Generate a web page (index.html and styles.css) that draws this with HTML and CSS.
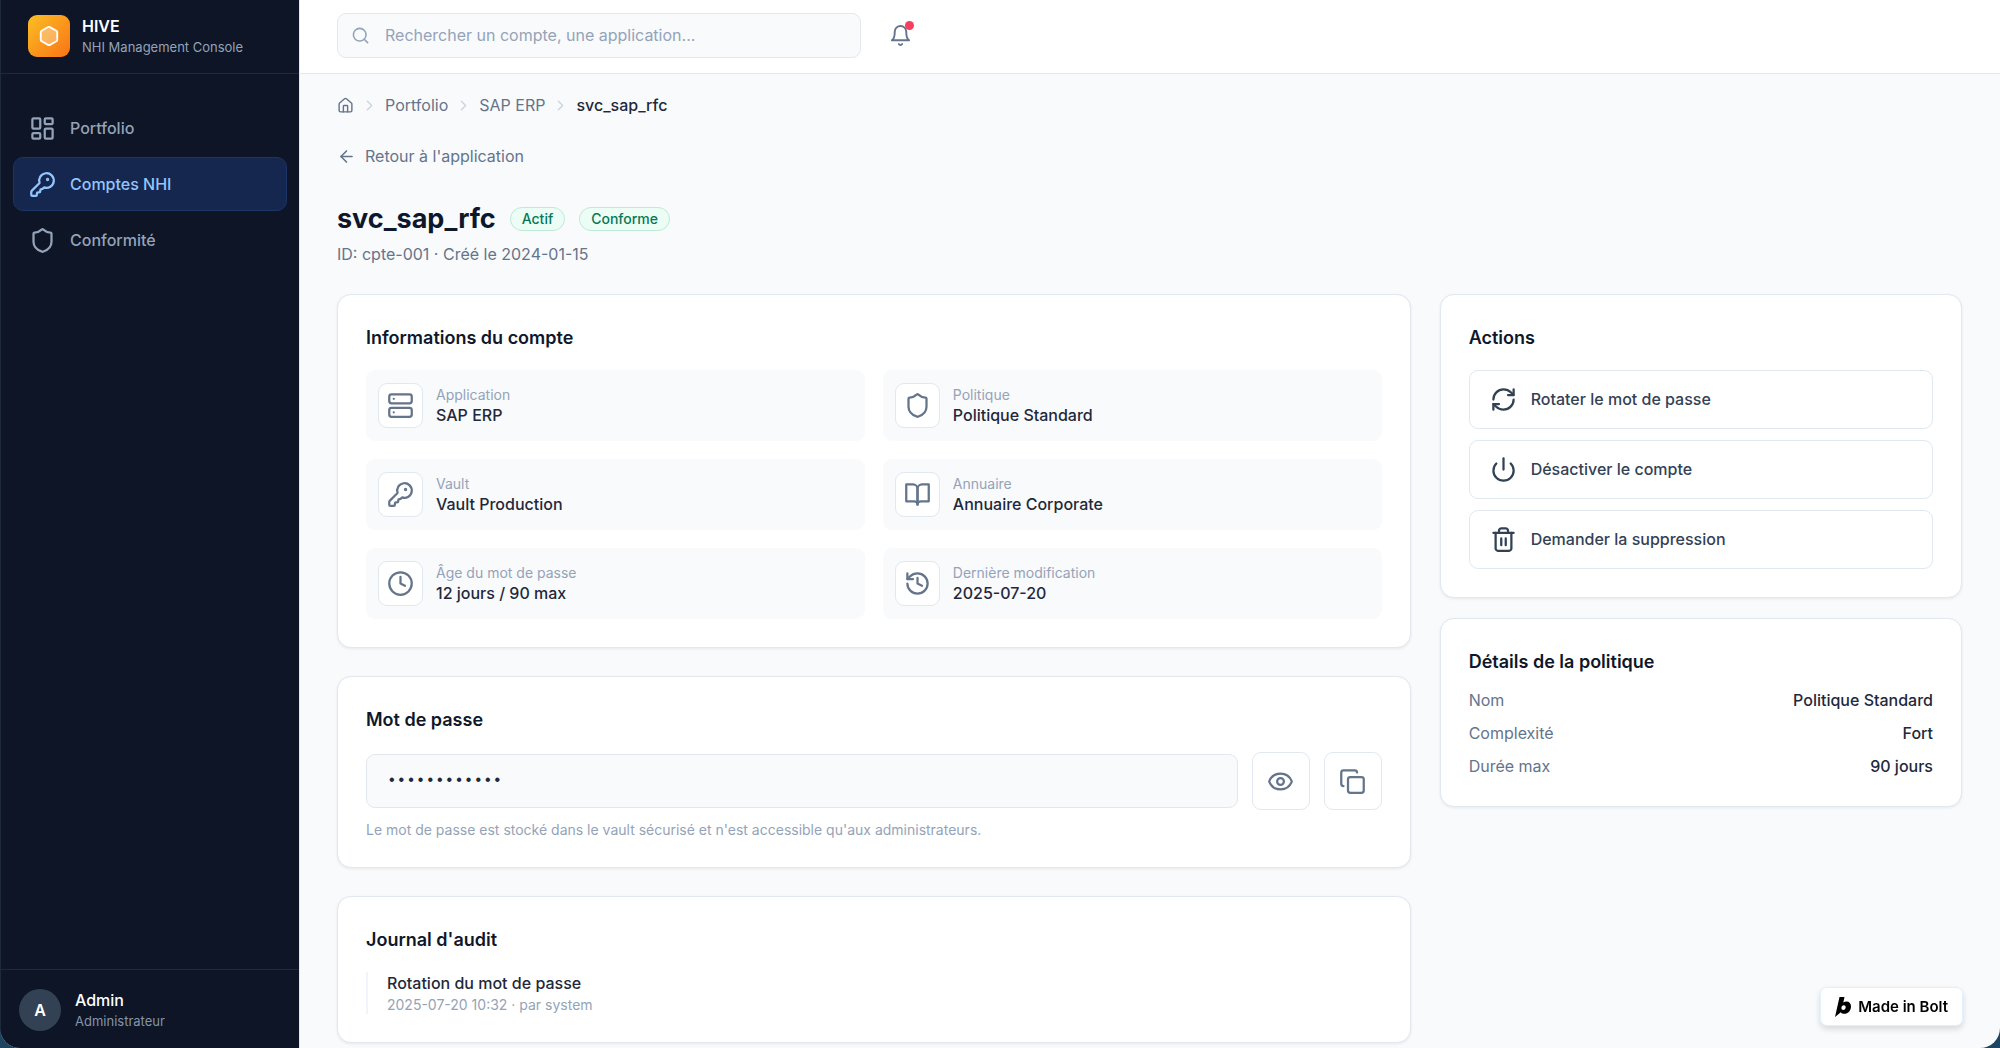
FILE: index.html
```html
<!DOCTYPE html>
<html lang="fr">
<head>
  <meta charset="UTF-8">
  <meta name="viewport" content="width=device-width, initial-scale=1.0">
  <title>HIVE - NHI Management Console</title>
  <link rel="stylesheet" href="styles.css">
</head>
<body>
  <div class="app">
    <aside class="sidebar">
      <div class="brand">
        <div class="logo">
          <svg class="icon" viewBox="0 0 24 24"><path fill="#fff" fill-opacity=".3" d="M21 16V8a2 2 0 0 0-1-1.73l-7-4a2 2 0 0 0-2 0l-7 4A2 2 0 0 0 3 8v8a2 2 0 0 0 1 1.73l7 4a2 2 0 0 0 2 0l7-4A2 2 0 0 0 21 16z"/></svg>
        </div>
        <div>
          <div class="brand-name">HIVE</div>
          <div class="brand-sub">NHI Management Console</div>
        </div>
      </div>

      <nav class="nav">
        <a href="#" class="nav-link">
          <svg class="icon icon-lg" viewBox="0 0 24 24"><rect width="7" height="9" x="3" y="3" rx="1"/><rect width="7" height="5" x="14" y="3" rx="1"/><rect width="7" height="9" x="14" y="12" rx="1"/><rect width="7" height="5" x="3" y="16" rx="1"/></svg>
          Portfolio
        </a>
        <a href="#" class="nav-link active">
          <svg class="icon icon-lg" viewBox="0 0 24 24"><path d="M2.586 17.414A2 2 0 0 0 2 18.828V21a1 1 0 0 0 1 1h3a1 1 0 0 0 1-1v-1a1 1 0 0 1 1-1h1a1 1 0 0 0 1-1v-1a1 1 0 0 1 1-1h.172a2 2 0 0 0 1.414-.586l.814-.814a6.5 6.5 0 1 0-4-4z"/><circle cx="16.5" cy="7.5" r=".5" fill="currentColor"/></svg>
          Comptes NHI
        </a>
        <a href="#" class="nav-link">
          <svg class="icon icon-lg" viewBox="0 0 24 24"><path d="M20 13c0 5-3.5 7.5-7.66 8.95a1 1 0 0 1-.67-.01C7.5 20.5 4 18 4 13V6a1 1 0 0 1 1-1c2 0 4.5-1.2 6.24-2.72a1.17 1.17 0 0 1 1.52 0C14.51 3.81 17 5 19 5a1 1 0 0 1 1 1z"/></svg>
          Conformité
        </a>
      </nav>

      <div class="user">
        <div class="avatar">A</div>
        <div>
          <div class="user-name">Admin</div>
          <div class="user-role">Administrateur</div>
        </div>
      </div>
    </aside>

    <div class="main">
      <header class="topbar">
        <label class="search">
          <svg class="icon icon-sm" viewBox="0 0 24 24"><circle cx="11" cy="11" r="8"/><path d="m21 21-4.3-4.3"/></svg>
          <input type="search" placeholder="Rechercher un compte, une application..." aria-label="Rechercher">
        </label>
        <button type="button" class="bell" aria-label="Notifications">
          <svg class="icon icon-md" viewBox="0 0 24 24"><path d="M6 8a6 6 0 0 1 12 0c0 7 3 9 3 9H3s3-2 3-9"/><path d="M10.3 21a1.94 1.94 0 0 0 3.4 0"/></svg>
          <span class="dot"></span>
        </button>
      </header>

      <main class="content">
        <nav class="breadcrumb">
          <a href="#" aria-label="Accueil"><svg class="icon icon-xs" viewBox="0 0 24 24"><path d="M15 21v-8a1 1 0 0 0-1-1h-4a1 1 0 0 0-1 1v8"/><path d="M3 10a2 2 0 0 1 .709-1.528l7-5.999a2 2 0 0 1 2.582 0l7 5.999A2 2 0 0 1 21 10v9a2 2 0 0 1-2 2H5a2 2 0 0 1-2-2z"/></svg></a>
          <svg class="icon icon-xs sep" viewBox="0 0 24 24"><path d="m9 18 6-6-6-6"/></svg>
          <a href="#">Portfolio</a>
          <svg class="icon icon-xs sep" viewBox="0 0 24 24"><path d="m9 18 6-6-6-6"/></svg>
          <a href="#">SAP ERP</a>
          <svg class="icon icon-xs sep" viewBox="0 0 24 24"><path d="m9 18 6-6-6-6"/></svg>
          <span class="current">svc_sap_rfc</span>
        </nav>

        <a href="#" class="back">
          <svg class="icon icon-sm" viewBox="0 0 24 24"><path d="m12 19-7-7 7-7"/><path d="M19 12H5"/></svg>
          Retour à l'application
        </a>

        <div class="title-row">
          <h1>svc_sap_rfc</h1>
          <span class="badge">Actif</span>
          <span class="badge">Conforme</span>
        </div>
        <p class="subtitle">ID: cpte-001 · Créé le 2024-01-15</p>

        <div class="columns">
          <div class="col-left">
            <section class="card">
              <h2>Informations du compte</h2>
              <div class="info-grid">
                <div class="info">
                  <div class="info-icon"><svg class="icon icon-lg" viewBox="0 0 24 24"><rect width="20" height="8" x="2" y="2" rx="2"/><rect width="20" height="8" x="2" y="14" rx="2"/><path d="M6 6h.01M6 18h.01"/></svg></div>
                  <div>
                    <div class="small">Application</div>
                    <div class="value">SAP ERP</div>
                  </div>
                </div>
                <div class="info">
                  <div class="info-icon"><svg class="icon icon-lg" viewBox="0 0 24 24"><path d="M20 13c0 5-3.5 7.5-7.66 8.95a1 1 0 0 1-.67-.01C7.5 20.5 4 18 4 13V6a1 1 0 0 1 1-1c2 0 4.5-1.2 6.24-2.72a1.17 1.17 0 0 1 1.52 0C14.51 3.81 17 5 19 5a1 1 0 0 1 1 1z"/></svg></div>
                  <div>
                    <div class="small">Politique</div>
                    <div class="value">Politique Standard</div>
                  </div>
                </div>
                <div class="info">
                  <div class="info-icon"><svg class="icon icon-lg" viewBox="0 0 24 24"><path d="M2.586 17.414A2 2 0 0 0 2 18.828V21a1 1 0 0 0 1 1h3a1 1 0 0 0 1-1v-1a1 1 0 0 1 1-1h1a1 1 0 0 0 1-1v-1a1 1 0 0 1 1-1h.172a2 2 0 0 0 1.414-.586l.814-.814a6.5 6.5 0 1 0-4-4z"/><circle cx="16.5" cy="7.5" r=".5" fill="currentColor"/></svg></div>
                  <div>
                    <div class="small">Vault</div>
                    <div class="value">Vault Production</div>
                  </div>
                </div>
                <div class="info">
                  <div class="info-icon"><svg class="icon icon-lg" viewBox="0 0 24 24"><path d="M2 3h6a4 4 0 0 1 4 4v14a3 3 0 0 0-3-3H2z"/><path d="M22 3h-6a4 4 0 0 0-4 4v14a3 3 0 0 1 3-3h7z"/></svg></div>
                  <div>
                    <div class="small">Annuaire</div>
                    <div class="value">Annuaire Corporate</div>
                  </div>
                </div>
                <div class="info">
                  <div class="info-icon"><svg class="icon icon-lg" viewBox="0 0 24 24"><circle cx="12" cy="12" r="10"/><path d="M12 6v6l4 2"/></svg></div>
                  <div>
                    <div class="small">Âge du mot de passe</div>
                    <div class="value">12 jours / 90 max</div>
                  </div>
                </div>
                <div class="info">
                  <div class="info-icon"><svg class="icon icon-lg" viewBox="0 0 24 24"><path d="M3 12a9 9 0 1 0 9-9 9.75 9.75 0 0 0-6.74 2.74L3 8"/><path d="M3 3v5h5"/><path d="M12 7v5l4 2"/></svg></div>
                  <div>
                    <div class="small">Dernière modification</div>
                    <div class="value">2025-07-20</div>
                  </div>
                </div>
              </div>
            </section>

            <section class="card">
              <h2><label for="password">Mot de passe</label></h2>
              <div class="password-row">
                <input type="password" id="password" value="motdepasse12" readonly>
                <button type="button" class="icon-btn" aria-label="Afficher"><svg class="icon icon-lg" viewBox="0 0 24 24"><path d="M2.062 12.348a1 1 0 0 1 0-.696 10.75 10.75 0 0 1 19.876 0 1 1 0 0 1 0 .696 10.75 10.75 0 0 1-19.876 0"/><circle cx="12" cy="12" r="3"/></svg></button>
                <button type="button" class="icon-btn" aria-label="Copier"><svg class="icon icon-lg" viewBox="0 0 24 24"><rect width="14" height="14" x="8" y="8" rx="2"/><path d="M4 16c-1.1 0-2-.9-2-2V4c0-1.1.9-2 2-2h10c1.1 0 2 .9 2 2"/></svg></button>
              </div>
              <p class="small hint">Le mot de passe est stocké dans le vault sécurisé et n'est accessible qu'aux administrateurs.</p>
            </section>

            <section class="card">
              <h2>Journal d'audit</h2>
              <div class="log">
                <div class="value">Rotation du mot de passe</div>
                <div class="small">2025-07-20 10:32 · par system</div>
              </div>
            </section>
          </div>

          <div class="col-right">
            <section class="card">
              <h2>Actions</h2>
              <div class="actions">
                <button type="button" class="action">
                  <svg class="icon icon-lg" viewBox="0 0 24 24"><path d="M3 12a9 9 0 0 1 9-9 9.75 9.75 0 0 1 6.74 2.74L21 8"/><path d="M21 3v5h-5"/><path d="M21 12a9 9 0 0 1-9 9 9.75 9.75 0 0 1-6.74-2.74L3 16"/><path d="M8 16H3v5"/></svg>
                  Rotater le mot de passe
                </button>
                <button type="button" class="action">
                  <svg class="icon icon-lg" viewBox="0 0 24 24"><path d="M12 2v10"/><path d="M18.4 6.6a9 9 0 1 1-12.77.04"/></svg>
                  Désactiver le compte
                </button>
                <button type="button" class="action">
                  <svg class="icon icon-lg" viewBox="0 0 24 24"><path d="M3 6h18"/><path d="M19 6v14c0 1-1 2-2 2H7c-1 0-2-1-2-2V6"/><path d="M8 6V4c0-1 1-2 2-2h4c1 0 2 1 2 2v2"/><path d="M10 11v6M14 11v6"/></svg>
                  Demander la suppression
                </button>
              </div>
            </section>

            <section class="card policy">
              <h2>Détails de la politique</h2>
              <dl>
                <div><dt>Nom</dt><dd>Politique Standard</dd></div>
                <div><dt>Complexité</dt><dd>Fort</dd></div>
                <div><dt>Durée max</dt><dd>90 jours</dd></div>
              </dl>
            </section>
          </div>
        </div>
      </main>
    </div>

    <a href="#" class="bolt">
      <svg viewBox="0 0 16 20"><path fill-rule="evenodd" d="M4.5 0h5L8.3 5.6C9.3 4.8 10.3 4.5 11.4 4.5c3 0 4.6 2 4.6 5 0 4-2.8 7.3-6.7 7.3-1.6 0-2.8-.5-3.5-1.5L0 20zM8.800 8.300c-1.400 0-2.400 1.200-2.400 2.700 0 1.200.7 1.900 1.800 1.900 1.400 0 2.500-1.200 2.500-2.700 0-1.100-.7-1.900-1.900-1.900z"/></svg>
      Made in Bolt
    </a>
  </div>
</body>
</html>
```
FILE: styles.css
```css
* {
  box-sizing: border-box;
  margin: 0;
  padding: 0;
}

body {
  background: #1d4460;
  color: #1e293b;
  font-family: Inter, "Liberation Sans", sans-serif;
  font-size: 16px;
  line-height: 23px;
}

a {
  color: inherit;
  text-decoration: none;
}

button, input {
  font: inherit;
  color: inherit;
}

.icon {
  display: block;
  flex: none;
  width: 22px;
  height: 22px;
  fill: none;
  stroke: currentColor;
  stroke-width: 2;
  stroke-linecap: round;
  stroke-linejoin: round;
}

.icon-xs {
  width: 17px;
  height: 17px;
}

.icon-sm {
  width: 19px;
  height: 19px;
}

.icon-md {
  width: 23px;
  height: 23px;
}

.icon-lg {
  width: 27px;
  height: 27px;
}

.app {
  display: flex;
  height: 100vh;
  overflow: hidden;
  background: #f9fafc;
  border-radius: 0 0 20px 20px;
}

/* sidebar */
.sidebar {
  display: flex;
  flex-direction: column;
  flex: none;
  width: 300px;
  background: #0d1526;
  border-left: 1px solid #1e293b;
  border-right: 1px solid #e2e8f0;
}

.brand {
  display: flex;
  align-items: center;
  gap: 12px;
  height: 74px;
  padding: 0 27px 1px;
  border-bottom: 1px solid #1e293b;
}

.logo {
  display: grid;
  place-items: center;
  width: 42px;
  height: 42px;
  border-radius: 9px;
  background: linear-gradient(135deg, #fbbf24, #f97316);
  color: #fff;
}

.brand-name {
  color: #fff;
  font-weight: 600;
}

.brand-sub, .user-role {
  color: #94a3b8;
  font-size: 13px;
  line-height: 19px;
}

.nav {
  display: flex;
  flex-direction: column;
  flex: 1;
  gap: 2px;
  padding: 27px 12px;
}

.nav-link {
  display: flex;
  align-items: center;
  gap: 14px;
  height: 54px;
  padding: 0 15px;
  border: 1px solid transparent;
  border-radius: 10px;
  color: #94a3b8;
  font-weight: 500;
}

.nav-link.active {
  background: #15264f;
  border-color: #1c3566;
  color: #93c5fd;
}

.user {
  display: flex;
  align-items: center;
  gap: 14px;
  height: 79px;
  padding: 2px 18px 0;
  border-top: 1px solid #1e293b;
}

.avatar {
  display: grid;
  place-items: center;
  width: 42px;
  height: 42px;
  border-radius: 50%;
  background: #334155;
  color: #fff;
  font-weight: 600;
}

.user-name {
  color: #fff;
  font-weight: 500;
}

.user-role {
  color: #8494aa;
}

/* main */
.main {
  flex: 1;
  min-width: 0;
}

.topbar {
  display: flex;
  align-items: center;
  gap: 28px;
  height: 74px;
  padding: 0 37px 2px;
  background: #fff;
  border-bottom: 1px solid #e2e8f0;
}

.search {
  display: flex;
  align-items: center;
  gap: 15px;
  width: 524px;
  height: 45px;
  padding: 0 13px;
  background: #f9fafc;
  border: 1px solid #e2e8f0;
  border-radius: 9px;
  color: #94a3b8;
}

.search input {
  flex: 1;
  border: none;
  outline: none;
  background: none;
}

.search input::placeholder {
  color: #94a3b8;
}

.bell {
  position: relative;
  border: none;
  background: none;
  color: #64748b;
}

.dot {
  position: absolute;
  top: -3px;
  right: -2px;
  width: 9px;
  height: 9px;
  border-radius: 50%;
  background: #f43f5e;
}

.content {
  padding: 20px 38px 20px 37px;
}

.breadcrumb {
  display: flex;
  align-items: center;
  gap: 7px;
  color: #64748b;
}

.sep {
  color: #cbd5e1;
}

.current {
  color: #1e293b;
  font-weight: 500;
}

.back {
  display: inline-flex;
  align-items: center;
  gap: 9px;
  margin-top: 28px;
  color: #64748b;
}

.title-row {
  display: flex;
  align-items: center;
  gap: 14px;
  margin-top: 27px;
}

h1 {
  color: #0f172a;
  font-size: 27px;
  line-height: 40px;
  font-weight: 700;
}

.badge {
  padding: 0 11px;
  border: 1px solid #bfead6;
  border-radius: 12px;
  background: #ecfdf5;
  color: #047857;
  font-size: 14px;
  line-height: 22px;
  font-weight: 500;
}

.subtitle {
  margin-top: 4px;
  color: #64748b;
}

.columns {
  display: grid;
  grid-template-columns: repeat(3, 1fr);
  align-items: start;
  gap: 29px;
  margin-top: 28px;
}

.col-left {
  display: grid;
  grid-column: span 2;
  gap: 28px;
}

.col-right {
  display: grid;
  gap: 20px;
}

.card {
  padding: 28px;
  background: #fff;
  border: 1px solid #e2e8f0;
  border-radius: 14px;
  box-shadow: 0 1px 3px rgba(15, 23, 42, 0.08);
}

h2 {
  margin-bottom: 17px;
  color: #0f172a;
  font-size: 18px;
  line-height: 30px;
  font-weight: 600;
}

.info-grid {
  display: grid;
  grid-template-columns: 1fr 1fr;
  gap: 18px;
}

.info {
  display: flex;
  align-items: center;
  gap: 13px;
  padding: 13px 12px;
  border-radius: 9px;
  background: #f9fafc;
}

.info-icon {
  display: grid;
  place-items: center;
  width: 45px;
  height: 45px;
  background: #fff;
  border: 1px solid #e2e8f0;
  border-radius: 9px;
  color: #64748b;
}

.small {
  color: #94a3b8;
  font-size: 14px;
  line-height: 19px;
}

.value {
  font-weight: 500;
}

.password-row {
  display: flex;
  align-items: center;
  gap: 14px;
}

.password-row input {
  flex: 1;
  height: 54px;
  padding: 0 20px;
  border: 1px solid #e2e8f0;
  border-radius: 9px;
  outline: none;
  background: #f9fafc;
  font-family: "Liberation Mono", monospace;
}

.icon-btn {
  display: grid;
  place-items: center;
  width: 58px;
  height: 58px;
  border: 1px solid #e2e8f0;
  border-radius: 9px;
  background: #fff;
  color: #64748b;
}

.hint {
  margin-top: 10px;
}

.log {
  padding-left: 19px;
  border-left: 2px solid #f1f5f9;
}

.actions {
  display: grid;
  gap: 11px;
}

.action {
  display: flex;
  align-items: center;
  gap: 14px;
  height: 59px;
  padding: 0 20px;
  border: 1px solid #e2e8f0;
  border-radius: 9px;
  background: #fff;
  color: #334155;
  font-weight: 500;
}

.policy h2 {
  margin-bottom: 12px;
}

.policy dl {
  display: grid;
  gap: 10px;
}

.policy dl div {
  display: flex;
  justify-content: space-between;
}

.policy dt {
  color: #64748b;
}

.policy dd {
  font-weight: 500;
}

/* floating badge */
.bolt {
  position: fixed;
  right: 37px;
  bottom: 22px;
  display: flex;
  align-items: center;
  gap: 7px;
  height: 39px;
  padding: 0 14px;
  border: 1px solid #e0f2fe;
  border-radius: 7px;
  background: #fff;
  box-shadow: 0 3px 6px rgba(0, 0, 0, 0.14);
  color: #000;
  font-size: 15px;
  font-weight: 600;
}

.bolt svg {
  width: 16px;
  height: 20px;
}
```
